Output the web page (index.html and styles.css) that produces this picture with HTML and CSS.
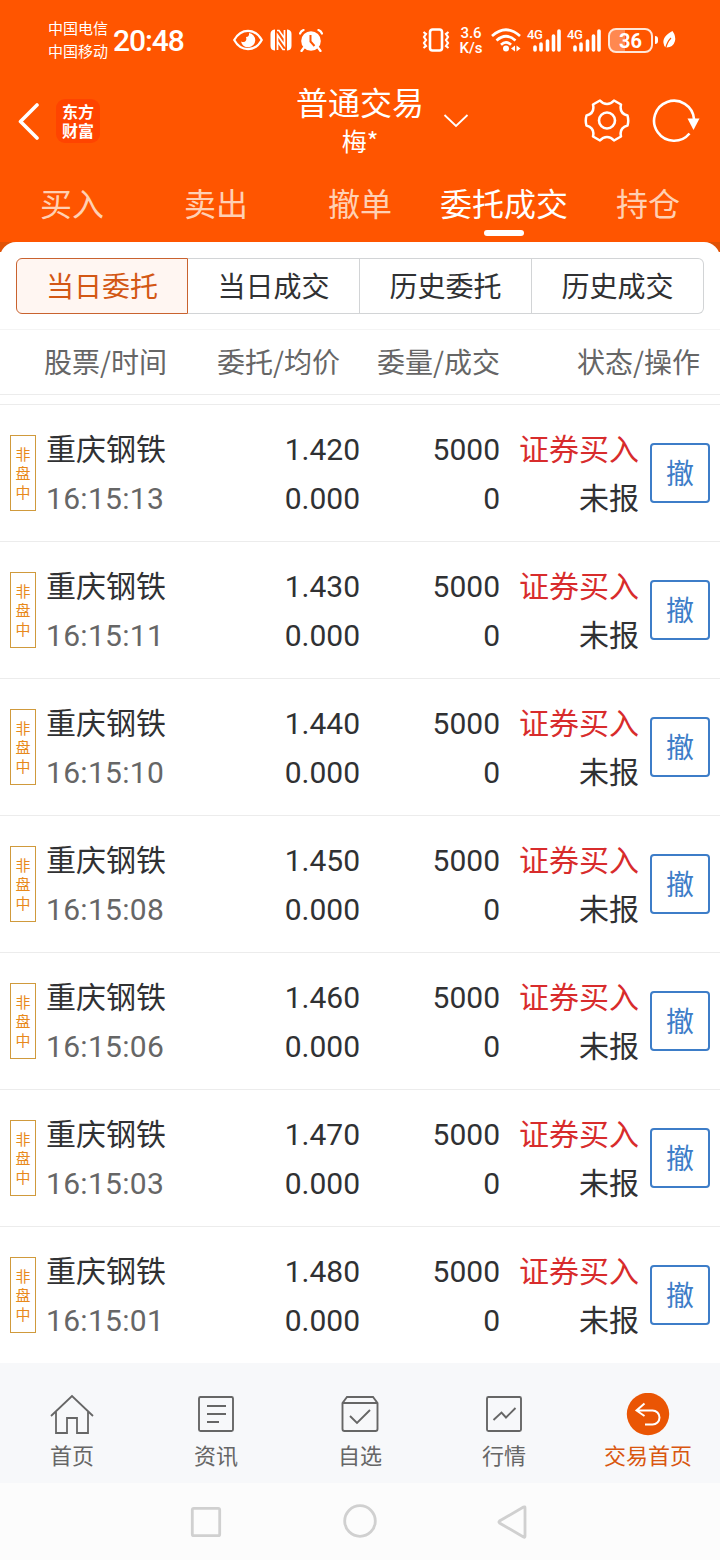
FILE: index.html
```html
<!DOCTYPE html>
<html lang="zh-CN">
<head>
    <meta charset="UTF-8">
    <meta name="viewport" content="width=device-width, initial-scale=1.0">
    <title>普通交易</title>
    <link rel="stylesheet" href="styles.css">
</head>
<body>
    <header class="top">
        <div class="status">
            <div class="carrier"><span>中国电信</span><span>中国移动</span></div>
            <span class="time">20:48</span>
            <svg class="eye" width="30" height="22" viewBox="0 0 30 22">
                <path d="M1.2 11C8-1.2 22-1.2 28.8 11 22 23.2 8 23.2 1.2 11z" fill="none" stroke="#fff" stroke-width="2.2" stroke-linejoin="round"/>
                <path d="M16 4a7.200 7.200 0 1 1-8 8.500q3.500 1.500 5-1 .8-1.500 0-3.500Q16.500 8 16 4z" fill="#fff"/>
            </svg>
            <svg class="nfc" width="22" height="22" viewBox="0 0 22 22">
                <path d="M5 .5H4.500Q.5 1 .5 5v12q0 4 4 4.500H5zM17 .5h.5q4 .5 4 4.500v12q0 4-4 4.500H17z" fill="#fff"/>
                <path d="M7.500 21V6l7 10V1M7 1.500h2l5.500 8M15 20.500h-2l-5.500-8" fill="none" stroke="#fff" stroke-width="1.700"/>
            </svg>
            <svg class="alarm" width="24" height="23" viewBox="0 0 24 23">
                <circle cx="12" cy="12" r="9.800" fill="#fff"/>
                <path d="M1 4.500Q2 2 4.500 1M23 4.500Q22 2 19.500 1M5 18.500L2.500 22M19 18.500l2.500 3.500" fill="none" stroke="#fff" stroke-width="2.200" stroke-linecap="round"/>
                <path d="M11.500 6v6.500l4 4.500" fill="none" stroke="#f50" stroke-width="2"/>
            </svg>
            <svg class="vibrate" width="28" height="24" viewBox="0 0 28 24">
                <rect x="8" y="1.500" width="12" height="21" rx="2.500" fill="none" stroke="#fff" stroke-width="2.600"/>
                <path d="M1.500 4l2.500 2-2 3 2 3-2 3 2 3-2.500 2M26.500 4L24 6l2 3-2 3 2 3-2 3 2.500 2" fill="none" stroke="#fff" stroke-width="2.200"/>
            </svg>
            <div class="speed"><span>3.6</span><span>K/s</span></div>
            <svg class="wifi" width="30" height="24" viewBox="0 0 30 24">
                <path d="M1 8Q15-4.500 29 8M5.500 12.500Q15 4 24.500 12.500M10 16.800Q15 12 20 16.800" fill="none" stroke="#fff" stroke-width="2.700"/>
                <circle cx="15" cy="20.500" r="3" fill="#fff"/>
                <path d="M24 17.500v6l-4-3zM25.500 17.500v6l4-3z" fill="#fff"/>
            </svg>
            <div class="signal">
                <span>4G</span>
                <svg width="28" height="24" viewBox="0 0 28 24"><path d="M2 22v-3M8 22v-6M14.500 22V13M20.500 22V8M26 22V3" stroke="#fff" stroke-width="3.600" stroke-linecap="round"/></svg>
            </div>
            <div class="signal">
                <span>4G</span>
                <svg width="28" height="24" viewBox="0 0 28 24"><path d="M2 22v-3M8 22v-6M14.500 22V13M20.500 22V8M26 22V3" stroke="#fff" stroke-width="3.600" stroke-linecap="round"/></svg>
            </div>
            <div class="battery">36</div>
            <span class="nub"></span>
            <svg class="leaf" width="13" height="20" viewBox="0 0 13 20">
                <path d="M9.500 1C2 5 0 9 .500 13q.300 3 2.200 4.500Q10 18 12 11q1-5-2.500-10z" fill="#fff"/>
                <path d="M8 8q-4 4-5.500 11" fill="none" stroke="#f50" stroke-width="1.200"/>
            </svg>
        </div>

        <div class="bar">
            <svg class="back" width="22" height="38" viewBox="0 0 22 38"><path d="M20 3L3.500 19.500 20 36" fill="none" stroke="#fff" stroke-width="3.600" stroke-linecap="round" stroke-linejoin="round"/></svg>
            <div class="logo"><span>东方</span><span>财富</span></div>
            <div class="account">
                <h1>普通交易</h1>
                <p>梅*</p>
            </div>
            <svg class="down" width="26" height="14" viewBox="0 0 26 14"><path d="M1.500 1L13 12l11.500-11" fill="none" stroke="#fff" stroke-width="1.800"/></svg>
            <svg class="gear" width="46" height="44" viewBox="0 0 46 44">
                <path d="M16 1.500Q19 5 23 5T30 1.500L37 5.500Q35 14.500 43.500 16.500Q45 22 43.500 26.500Q35 29 37 37.500L30 41.500Q27 38 23 38T16 41.500L9 37.500Q11 29 2.500 26.500Q1 22 2.500 16.500Q11 14.500 9 5.500Z" fill="none" stroke="#fff" stroke-width="2.500" stroke-linejoin="round"/>
                <circle cx="23" cy="21.500" r="8" fill="none" stroke="#fff" stroke-width="2.600"/>
            </svg>
            <svg class="refresh" width="48" height="44" viewBox="0 0 48 44">
                <path d="M37.500 34.500A20 20 0 1 1 42 20" fill="none" stroke="#fff" stroke-width="2.600"/>
                <path d="M35.500 19.500h12L41.500 31z" fill="#fff"/>
            </svg>
        </div>

        <nav class="tabs">
            <a>买入</a>
            <a>卖出</a>
            <a>撤单</a>
            <a class="on">委托成交</a>
            <a>持仓</a>
        </nav>
    </header>

    <main>
        <div class="sheet">
            <div class="segment">
                <button type="button" class="active">当日委托</button>
                <button type="button">当日成交</button>
                <button type="button">历史委托</button>
                <button type="button">历史成交</button>
            </div>
            <div class="thead">
                <span>股票/时间</span>
                <span>委托/均价</span>
                <span>委量/成交</span>
                <span>状态/操作</span>
            </div>
            <div class="list" id="list"></div>
        </div>
    </main>

    <nav class="bottom">
        <a>
            <svg width="44" height="44" viewBox="0 0 44 44"><path d="M1 23L22 3l21 20M6 19v21h11V25h10v15h11V19" fill="none" stroke="#666" stroke-width="1.800"/></svg>
            <span>首页</span>
        </a>
        <a>
            <svg width="44" height="44" viewBox="0 0 44 44"><rect x="5" y="4" width="34" height="34" rx="1.500" fill="none" stroke="#666" stroke-width="1.900"/><path d="M13 13h19M13 21h19M13 29h12" stroke="#666" stroke-width="1.900"/></svg>
            <span>资讯</span>
        </a>
        <a>
            <svg width="44" height="44" viewBox="0 0 44 44"><path d="M4.500 10L9 4h26l4.500 6v26q0 2-2 2h-31q-2 0-2-2zH39.500M12 23l7 7 13-13" fill="none" stroke="#666" stroke-width="1.900"/></svg>
            <span>自选</span>
        </a>
        <a>
            <svg width="44" height="44" viewBox="0 0 44 44"><rect x="5" y="4" width="34" height="34" rx="1.500" fill="none" stroke="#666" stroke-width="1.900"/><path d="M11.500 27l8-7.500 4.500 5 9.500-9.500" fill="none" stroke="#666" stroke-width="1.900"/></svg>
            <span>行情</span>
        </a>
        <a class="current">
            <svg width="44" height="44" viewBox="0 0 44 44"><circle cx="22" cy="21" r="21.200" fill="#ea5504"/><path d="M18.500 10.500l-8 7 8 5.500M11 17.500h15.500a7 7 0 0 1 0 14H19" fill="none" stroke="#fff" stroke-width="2"/></svg>
            <span>交易首页</span>
        </a>
    </nav>

    <footer class="keys">
        <svg width="32" height="36" viewBox="0 0 32 36"><rect x="2.300" y="4.300" width="27.400" height="27.400" rx="1.500"/></svg>
        <svg width="34" height="36" viewBox="0 0 34 36"><circle cx="17" cy="17" r="15.300"/></svg>
        <svg width="30" height="36" viewBox="0 0 30 36"><path d="M28 3.800v28.500q0 1.500-1.500.7L2.500 19q-1.200-1 0-2l24-14q1.500-.7 1.500.8z"/></svg>
    </footer>

    <script>
        const orders = [
            ["16:15:13", "1.420"],
            ["16:15:11", "1.430"],
            ["16:15:10", "1.440"],
            ["16:15:08", "1.450"],
            ["16:15:06", "1.460"],
            ["16:15:03", "1.470"],
            ["16:15:01", "1.480"]
        ];

        document.getElementById("list").innerHTML = orders.map(([time, price]) => `
            <div class="row">
                <div class="tag"><span>非</span><span>盘</span><span>中</span></div>
                <div class="stock"><span>重庆钢铁</span><span class="grey">${time}</span></div>
                <div class="num"><span>${price}</span><span>0.000</span></div>
                <div class="num"><span>5000</span><span>0</span></div>
                <div class="num"><span class="red">证券买入</span><span>未报</span></div>
                <button type="button" class="cancel">撤</button>
            </div>`).join("");
    </script>
</body>
</html>
```
FILE: styles.css
```css
* {
    box-sizing: border-box;
}
body {
    margin: 0;
    width: 720px;
    height: 1560px;
    overflow: hidden;
    display: flex;
    flex-direction: column;
    background: #fff;
    color: #303133;
    font-family: "Noto Sans CJK SC", sans-serif;
}
h1, p {
    margin: 0;
    font-weight: 400;
}
button {
    padding: 0;
    font-family: inherit;
    color: inherit;
    background: none;
}
svg {
    display: block;
    flex: none;
}

/* orange header */
.top {
    height: 242px;
    background: #ff5500;
    color: #fff;
}
.status {
    height: 80px;
    padding-left: 48px;
    display: flex;
    align-items: center;
}
.carrier {
    width: 65px;
    margin-bottom: 2px;
    display: flex;
    flex-direction: column;
    font-size: 15px;
    line-height: 23px;
}
.time {
    width: 120px;
    padding-top: 1px;
    font-family: Roboto, sans-serif;
    font-size: 30px;
    line-height: 40px;
    font-weight: 500;
    letter-spacing: -1.1px;
}
.nfc {
    margin-left: 7px;
}
.alarm {
    margin-left: 7px;
}
.vibrate {
    margin-left: 99px;
}
.speed {
    margin-left: 9px;
    padding-top: 1px;
    width: 24px;
    display: flex;
    flex-direction: column;
    align-items: center;
    font-family: Roboto, sans-serif;
    font-size: 15px;
    line-height: 15px;
    font-weight: 500;
}
.wifi {
    margin-left: 8px;
}
.signal {
    position: relative;
    width: 34px;
    height: 24px;
    margin-left: 6px;
    display: flex;
    justify-content: flex-end;
}
.signal span {
    position: absolute;
    left: 0;
    top: 0;
    font-family: Roboto, sans-serif;
    font-size: 13px;
    line-height: 13px;
    font-weight: 500;
    letter-spacing: -0.5px;
}
.battery {
    margin-left: 7px;
    width: 45px;
    height: 25px;
    border: 2px solid #ffe6d8;
    border-radius: 8px;
    background: linear-gradient(90deg, #ff8850 36%, transparent 36%);
    text-align: center;
    font-family: Roboto, sans-serif;
    font-size: 20px;
    line-height: 22px;
    font-weight: 700;
}
.nub {
    width: 3px;
    height: 8px;
    margin: 0 5px 0 2px;
    border-radius: 0 3px 3px 0;
    background: #fff;
}
.bar {
    height: 82px;
    padding-left: 17px;
    display: flex;
    align-items: center;
}
.logo {
    margin-left: 17px;
    width: 44px;
    height: 44px;
    padding-bottom: 1px;
    border-radius: 9px;
    background: #ff4400;
    display: flex;
    flex-direction: column;
    align-items: center;
    justify-content: center;
    font-size: 16px;
    line-height: 19px;
    font-weight: 700;
}
.account {
    margin: 0 0 1px 190px;
    width: 140px;
    text-align: center;
}
.account h1 {
    font-size: 32px;
    line-height: 39px;
}
.account p {
    font-size: 25px;
    line-height: 38px;
}
.down {
    margin-left: 13px;
}
.gear {
    margin-left: 115px;
}
.refresh {
    margin-left: 22px;
}
.tabs {
    height: 80px;
    display: grid;
    grid-template-columns: repeat(5, 1fr);
}
.tabs a {
    position: relative;
    height: 80px;
    text-align: center;
    font-size: 32px;
    line-height: 80px;
    color: #ffd0b3;
}
.tabs .on {
    color: #fff;
}
.tabs .on::after {
    content: "";
    position: absolute;
    left: 52px;
    bottom: 6px;
    width: 40px;
    height: 6px;
    border-radius: 3px;
    background: #fff;
}

/* white panel, darker orange shows behind its corners */
main {
    height: 1121px;
    background: linear-gradient(#e05206 10px, #fff 10px);
}
.sheet {
    height: 100%;
    padding-top: 16px;
    border-radius: 16px 16px 0 0;
    background: #fff;
}
.segment {
    height: 56px;
    margin: 0 16px;
    display: grid;
    grid-template-columns: repeat(4, 172px);
}
.segment button {
    border: 1px solid #d2d4d6;
    border-left-width: 0;
    padding-bottom: 2px;
    font-size: 28px;
    line-height: 52px;
}
.segment button:last-child {
    border-radius: 0 6px 6px 0;
}
.segment .active {
    border: 1px solid #c9622f;
    border-radius: 6px 0 0 6px;
    background: #fff6f2;
    color: #d35714;
}
.thead {
    margin-top: 15px;
    height: 66px;
    border-top: 1px solid #f4f4f4;
    border-bottom: 1px solid #ececec;
    display: grid;
    grid-template-columns: 167px 173px 160px 200px;
    text-align: right;
    font-size: 28px;
    line-height: 63px;
    color: #666;
}
.list {
    margin-top: 9px;
    border-top: 1px solid #ececec;
}
.row {
    height: 137px;
    padding-left: 10px;
    border-bottom: 1px solid #ececec;
    display: grid;
    grid-template-columns: 36px 174px 140px 140px 139px 71px;
    align-items: center;
    font-size: 30px;
    line-height: 49px;
}
.row:last-child {
    border-bottom-color: transparent;
}
.row div {
    display: flex;
    flex-direction: column;
}
.row .stock,
.row .num {
    padding-top: 1px;
    font-family: Roboto, "Noto Sans CJK SC", sans-serif;
}
.row .num {
    align-items: flex-end;
}
.row .tag {
    width: 26px;
    height: 76px;
    padding-bottom: 2px;
    border: 1px solid #d09a3c;
    align-items: center;
    justify-content: center;
    font-size: 15px;
    line-height: 19px;
    color: #e8891a;
}
.grey {
    color: #666;
    letter-spacing: 0.3px;
}
.red {
    color: #d82c2c;
}
.cancel {
    justify-self: end;
    width: 60px;
    height: 60px;
    padding-bottom: 2px;
    border: 2px solid #3d7dc8;
    border-radius: 4px;
    color: #3d7dc8;
    font-size: 28px;
    line-height: 54px;
}

/* app tabs and the phone keys */
.bottom {
    height: 120px;
    padding-top: 30px;
    background: #f7f8fa;
    display: grid;
    grid-template-columns: repeat(5, 1fr);
    color: #666;
}
.bottom a {
    display: flex;
    flex-direction: column;
    align-items: center;
    font-size: 22px;
    line-height: 35px;
}
.bottom .current {
    color: #d9560f;
}
.keys {
    height: 77px;
    padding: 21px 0 0 190px;
    background: #fcfcfc;
    display: flex;
}
.keys svg {
    fill: none;
    stroke: #d0d0d0;
    stroke-width: 2.8;
    margin-right: 121px;
}
.keys svg:nth-child(2) {
    margin-right: 120px;
}
```
